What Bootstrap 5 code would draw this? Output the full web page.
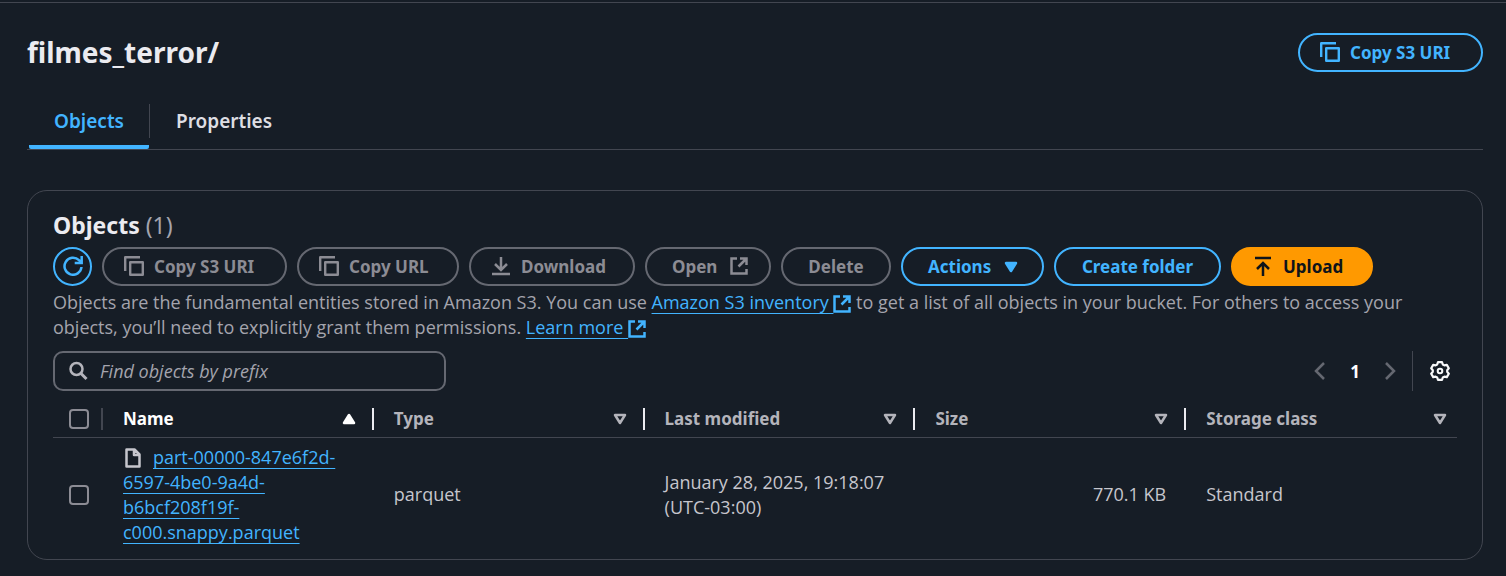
<!DOCTYPE html>
<html lang="en" data-bs-theme="dark">
<head>
<meta charset="utf-8">
<meta name="viewport" content="width=device-width, initial-scale=1">
<title>filmes_terror/</title>
<link href="https://cdn.jsdelivr.net/npm/bootstrap@5.3.0/dist/css/bootstrap.min.css" rel="stylesheet">
<style>
  body { background: #161d26; color: #c6c6cd; font-family: "Open Sans", "Noto Sans", sans-serif; font-size: 18px; line-height: 25px; }
  h1, h2, .btn, .nav-link, th, b { font-family: "Noto Sans", "Open Sans", sans-serif; }
  .page-shell { border-top: 1px solid #424650; margin-top: 2px; padding: 30px 23px 16px 27px; }
  .page-title { color: #ebebf0; font-size: 28px; line-height: 39px; font-weight: 700; }
  .pill { --bs-btn-font-family: "Noto Sans", "Open Sans", sans-serif; --bs-btn-font-size: 17px; --bs-btn-font-weight: 700; --bs-btn-line-height: 25px; --bs-btn-padding-y: 5px; --bs-btn-padding-x: 20px;
    --bs-btn-border-width: 2px; --bs-btn-border-radius: 20px; --bs-btn-color: #42b4ff; --bs-btn-border-color: #42b4ff;
    --bs-btn-hover-color: #75cfff; --bs-btn-hover-border-color: #75cfff; --bs-btn-hover-bg: #1b2b3c;
    --bs-btn-disabled-color: #8c8c94; --bs-btn-disabled-border-color: #656871; --bs-btn-disabled-opacity: 1;
    display: inline-flex; align-items: center; justify-content: center; gap: 10px; height: 39px; white-space: nowrap; }
  .pill .glyph { margin-bottom: 1px; }
  .pill-round { --bs-btn-padding-x: 0; width: 39px; }
  .pill-lead { justify-content: flex-start; }
  .pill-trail { justify-content: flex-start; gap: 13px; --bs-btn-padding-x: 25px; }
  .pill-upload { --bs-btn-color: #0f141a; --bs-btn-bg: #ff9900; --bs-btn-border-color: #ff9900; --bs-btn-hover-bg: #ffb347; --bs-btn-hover-color: #0f141a; --bs-btn-hover-border-color: #ffb347; }
  .w-copy { width: 185px; } .w-url { width: 162px; } .w-down { width: 166px; } .w-open { width: 126px; }
  .w-del { width: 110px; } .w-act { width: 143px; } .w-fold { width: 167px; } .w-up { width: 142px; }
  .glyph { width: 20px; height: 20px; flex: none; fill: none; stroke: currentColor; stroke-width: 2.5; }
  .glyph-ext { width: 18px; height: 18px; }
  .tab-strip { --bs-nav-tabs-border-width: 0; border-bottom: 1px solid #424650; margin-top: 26px; height: 52px; }
  .tab-strip .nav-link { --bs-nav-link-padding-x: 26px; --bs-nav-link-padding-y: 0; border: 0; border-bottom: 4px solid transparent; height: 51px;
    line-height: 34px; padding-top: 6px; font-size: 19px; font-weight: 600; color: #dedee3; }
  .tab-strip .nav-link.active { color: #42b4ff; background: none; border-bottom-color: #42b4ff; border-radius: 2px; }
  .tab-rule { width: 1px; height: 34px; margin-top: 6px; background: #424650; }
  .tab-first { width: 120px; margin-left: 2px; }
  .panel { border: 1px solid #424650; border-radius: 20px; margin-top: 40px; padding: 19px 25px 7px; }
  .panel h2 { font-size: 23px; line-height: 30px; font-weight: 700; color: #ebebf0; }
  .panel h2 span { color: #a4a4ad; font-weight: 400; }
  .toolbar { gap: 10px; margin-top: 7px; }
  .intro { color: #a4a4ad; margin-top: 4px; }
  .link-blue { color: #42b4ff; text-decoration: none; }
  .link-blue span { text-decoration: underline; text-decoration-thickness: 1px; text-underline-offset: 4px; text-decoration-skip-ink: none; }
  .link-blue .glyph { vertical-align: -4px; }
  .finder-row { margin-top: 11px; }
  .finder { width: 393px; height: 40px; border: 2px solid #656871; border-radius: 10px; padding: 0 13px; color: #b4b4bb; }
  .finder .glyph { margin-right: 12px; }
  .finder input { background: none; border: 0; outline: 0; color: #ebebf0; padding: 0; }
  .finder input::placeholder { color: #a4a4ad; font-style: italic; opacity: 1; }
  .plain { background: none; border: 0; padding: 0; line-height: 0; color: #656871; }
  .pager { padding-right: 7px; }
  .page-no { width: 50px; font-size: 17px; }
  .pager-rule { width: 1px; height: 40px; margin: 0 17px 0 12px; background: #424650; }
  .grid-table { table-layout: fixed; width: 100%; margin-top: 10px; }
  .grid-table th { height: 36px; padding: 0; border-bottom: 1px solid #424650; font-size: 17px; font-weight: 700; color: #b4b4bb; }
  .grid-table th .head { border-right: 2px solid #ebebf0; height: 22px; padding: 0 16px 0 20px; }
  .grid-table th:first-child .head { border-color: #424650; }
  .grid-table th:last-child .head { border: 0; padding-right: 10px; }
  .grid-table th.sorted { color: #fff; }
  .grid-table td { padding: 7px 20px; vertical-align: middle; }
  .grid-table .pick { width: 50px; padding: 0; }
  .grid-table .pick .head { padding: 0; }
  .tick { appearance: none; display: block; width: 20px; height: 20px; margin: 0 0 0 16px; border: 2px solid #8c8c94; border-radius: 4px; }
  .tick:checked { background: #42b4ff; }
  .tri { width: 14px; height: 12px; flex: none; fill: none; stroke: currentColor; stroke-width: 2.5; stroke-linejoin: round; }
  .file-glyph { margin-right: 10px; vertical-align: -4px; }
</style>
</head>
<body>
<svg class="d-none" xmlns="http://www.w3.org/2000/svg">
  <symbol id="copy" viewBox="0 0 20 20"><path d="M1.200 15V1.200H16M6.200 6.200h12.600v12.600H6.200z" stroke-width="2.400" stroke-linejoin="round"/></symbol>
  <symbol id="ext" viewBox="0 0 18 18"><path d="M7 1.500H1.500v15h15V12M10 1.500h6.500V8M16.500 1.500L8.500 9.500"/></symbol>
  <symbol id="sort" viewBox="0 0 14 12"><path d="M2 2h10L7 10z"/></symbol>
</svg>
<main class="page-shell">
  <header class="d-flex justify-content-between align-items-center">
    <h1 class="page-title m-0">filmes_terror/</h1>
    <button type="button" class="btn pill pill-lead w-copy"><svg class="glyph"><use href="#copy"/></svg>Copy S3 URI</button>
  </header>

  <nav class="nav nav-tabs tab-strip">
    <a class="nav-link active tab-first text-center px-0" href="#objects">Objects</a>
    <div class="tab-rule"></div>
    <a class="nav-link" href="#properties">Properties</a>
  </nav>

  <section class="panel" id="objects">
    <h2 class="m-0">Objects <span>(1)</span></h2>
    <div class="d-flex flex-wrap toolbar">
      <button type="button" class="btn pill pill-round" aria-label="Refresh"><svg class="glyph" viewBox="0 0 20 20"><path d="M18.500 11A8.500 8.500 0 1 1 16 4.200L18.500 6.500M18.700 0v7h-7"/></svg></button>
      <button type="button" class="btn pill pill-lead w-copy" disabled><svg class="glyph"><use href="#copy"/></svg>Copy S3 URI</button>
      <button type="button" class="btn pill pill-lead w-url" disabled><svg class="glyph"><use href="#copy"/></svg>Copy URL</button>
      <button type="button" class="btn pill pill-lead w-down" disabled><svg class="glyph" viewBox="0 0 20 20"><path d="M10 1v13M4 8l6 6 6-6M1 18h18"/></svg>Download</button>
      <button type="button" class="btn pill pill-trail w-open" disabled>Open<svg class="glyph glyph-ext"><use href="#ext"/></svg></button>
      <button type="button" class="btn pill w-del" disabled>Delete</button>
      <button type="button" class="btn pill pill-trail w-act">Actions<svg class="tri" viewBox="0 0 14 12"><path d="M2 2h10L7 10z" fill="currentColor"/></svg></button>
      <button type="button" class="btn pill w-fold">Create folder</button>
      <button type="button" class="btn pill pill-lead pill-upload w-up"><svg class="glyph" viewBox="0 0 20 20"><path d="M2 2h16M10 20V7M4 13l6-6 6 6"/></svg>Upload</button>
    </div>
    <p class="intro mb-0">Objects are the fundamental entities stored in Amazon S3. You can use <a class="link-blue" href="#inventory"><span>Amazon S3 inventory&nbsp;</span><svg class="glyph glyph-ext"><use href="#ext"/></svg></a> to get a list of all objects in your bucket. For others to access your objects, you’ll need to explicitly grant them permissions. <a class="link-blue" href="#learn"><span>Learn more&nbsp;</span><svg class="glyph glyph-ext"><use href="#ext"/></svg></a></p>

    <div class="d-flex justify-content-between align-items-center finder-row">
      <label class="finder d-flex align-items-center">
        <svg class="glyph" viewBox="0 0 20 20" aria-hidden="true"><circle cx="8.500" cy="8" r="6"/><path d="M13 12.500l5.500 5.500" stroke-width="3"/></svg>
        <input class="flex-fill" type="search" placeholder="Find objects by prefix" aria-label="Find objects by prefix">
      </label>
      <div class="d-flex align-items-center pager">
        <button type="button" class="plain" aria-label="Previous page"><svg class="glyph" viewBox="0 0 20 20"><path d="M14 2l-8 8 8 8"/></svg></button>
        <b class="page-no text-white text-center">1</b>
        <button type="button" class="plain" aria-label="Next page"><svg class="glyph" viewBox="0 0 20 20"><path d="M6 2l8 8-8 8"/></svg></button>
        <div class="pager-rule"></div>
        <button type="button" class="plain text-light" aria-label="Preferences"><svg class="glyph" viewBox="0 0 20 20"><path d="M8 1.200h4l.8 2.300 1.600.9 2.400-.5 2 3.400L17.200 9.200v1.600l1.600 1.900-2 3.400-2.400-.5-1.600.9-.8 2.300H8l-.8-2.300-1.600-.9-2.400.5-2-3.400L2.800 10.800V9.200L1.200 7.300l2-3.400 2.400.5 1.600-.9z" stroke-width="2.200" stroke-linejoin="round"/><circle cx="10" cy="10" r="2.300" stroke-width="2"/></svg></button>
      </div>
    </div>

    <table class="grid-table">
      <thead>
        <tr>
          <th class="pick"><div class="head d-flex align-items-center"><input class="tick" type="checkbox" aria-label="Select all"></div></th>
          <th class="sorted"><div class="head d-flex align-items-center justify-content-between">Name<svg class="tri" viewBox="0 0 14 12"><path d="M2 10h10L7 2z" fill="currentColor"/></svg></div></th>
          <th><div class="head d-flex align-items-center justify-content-between">Type<svg class="tri"><use href="#sort"/></svg></div></th>
          <th><div class="head d-flex align-items-center justify-content-between">Last modified<svg class="tri"><use href="#sort"/></svg></div></th>
          <th><div class="head d-flex align-items-center justify-content-between">Size<svg class="tri"><use href="#sort"/></svg></div></th>
          <th><div class="head d-flex align-items-center justify-content-between">Storage class<svg class="tri"><use href="#sort"/></svg></div></th>
        </tr>
      </thead>
      <tbody>
        <tr>
          <td class="pick"><input class="tick" type="checkbox" aria-label="Select part-00000"></td>
          <td><svg class="glyph file-glyph" viewBox="0 0 20 20"><path d="M3.500 1.500h8l5 5v12h-13zM11 2v5h5" stroke-linejoin="round"/></svg><a class="link-blue" href="#file"><span>part-00000-847e6f2d-6597-4be0-9a4d-b6bcf208f19f-c000.snappy.parquet</span></a></td>
          <td>parquet</td>
          <td>January 28, 2025, 19:18:07 (UTC-03:00)</td>
          <td class="text-end">770.1 KB</td>
          <td>Standard</td>
        </tr>
      </tbody>
    </table>
  </section>
</main>
<script src="https://cdn.jsdelivr.net/npm/bootstrap@5.3.0/dist/js/bootstrap.bundle.min.js"></script>
</body>
</html>
